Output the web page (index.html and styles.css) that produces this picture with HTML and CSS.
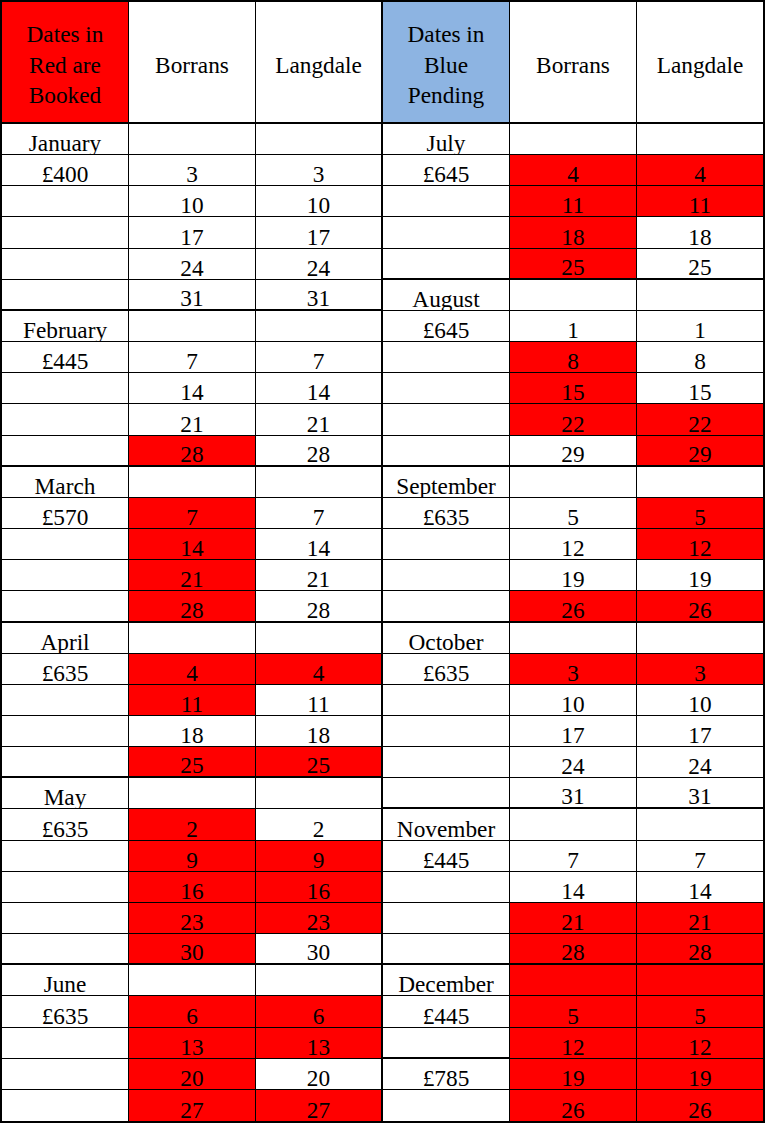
FILE: index.html
```html
<!DOCTYPE html>
<html lang="en">
<head>
<meta charset="utf-8">
<link rel="stylesheet" href="styles.css">
</head>
<body>
<div class="t">
  <div class="c h r">Dates in<br>Red are<br>Booked</div>
  <div class="c h">Borrans</div>
  <div class="c h">Langdale</div>
  <div class="c h b">Dates in<br>Blue<br>Pending</div>
  <div class="c h">Borrans</div>
  <div class="c h">Langdale</div>

  <div class="c">January</div><div class="c"></div><div class="c"></div><div class="c">July</div><div class="c"></div><div class="c"></div>
  <div class="c">£400</div><div class="c">3</div><div class="c">3</div><div class="c">£645</div><div class="c r">4</div><div class="c r">4</div>
  <div class="c"></div><div class="c">10</div><div class="c">10</div><div class="c"></div><div class="c r">11</div><div class="c r">11</div>
  <div class="c"></div><div class="c">17</div><div class="c">17</div><div class="c"></div><div class="c r">18</div><div class="c">18</div>
  <div class="c"></div><div class="c">24</div><div class="c">24</div><div class="c g"></div><div class="c g r">25</div><div class="c g">25</div>
  <div class="c g"></div><div class="c g">31</div><div class="c g">31</div><div class="c">August</div><div class="c"></div><div class="c"></div>
  <div class="c">February</div><div class="c"></div><div class="c"></div><div class="c">£645</div><div class="c">1</div><div class="c">1</div>
  <div class="c">£445</div><div class="c">7</div><div class="c">7</div><div class="c"></div><div class="c r">8</div><div class="c">8</div>
  <div class="c"></div><div class="c">14</div><div class="c">14</div><div class="c"></div><div class="c r">15</div><div class="c">15</div>
  <div class="c"></div><div class="c">21</div><div class="c">21</div><div class="c"></div><div class="c r">22</div><div class="c r">22</div>
  <div class="c g"></div><div class="c g r">28</div><div class="c g">28</div><div class="c g"></div><div class="c g">29</div><div class="c g r">29</div>
  <div class="c">March</div><div class="c"></div><div class="c"></div><div class="c">September</div><div class="c"></div><div class="c"></div>
  <div class="c">£570</div><div class="c r">7</div><div class="c">7</div><div class="c">£635</div><div class="c">5</div><div class="c r">5</div>
  <div class="c"></div><div class="c r">14</div><div class="c">14</div><div class="c"></div><div class="c">12</div><div class="c r">12</div>
  <div class="c"></div><div class="c r">21</div><div class="c">21</div><div class="c"></div><div class="c">19</div><div class="c">19</div>
  <div class="c g"></div><div class="c g r">28</div><div class="c g">28</div><div class="c g"></div><div class="c g r">26</div><div class="c g r">26</div>
  <div class="c">April</div><div class="c"></div><div class="c"></div><div class="c">October</div><div class="c"></div><div class="c"></div>
  <div class="c">£635</div><div class="c r">4</div><div class="c r">4</div><div class="c">£635</div><div class="c r">3</div><div class="c r">3</div>
  <div class="c"></div><div class="c r">11</div><div class="c">11</div><div class="c"></div><div class="c">10</div><div class="c">10</div>
  <div class="c"></div><div class="c">18</div><div class="c">18</div><div class="c"></div><div class="c">17</div><div class="c">17</div>
  <div class="c g"></div><div class="c g r">25</div><div class="c g r">25</div><div class="c"></div><div class="c">24</div><div class="c">24</div>
  <div class="c">May</div><div class="c"></div><div class="c"></div><div class="c g"></div><div class="c g">31</div><div class="c g">31</div>
  <div class="c">£635</div><div class="c r">2</div><div class="c">2</div><div class="c">November</div><div class="c"></div><div class="c"></div>
  <div class="c"></div><div class="c r">9</div><div class="c r">9</div><div class="c">£445</div><div class="c">7</div><div class="c">7</div>
  <div class="c"></div><div class="c r">16</div><div class="c r">16</div><div class="c"></div><div class="c">14</div><div class="c">14</div>
  <div class="c"></div><div class="c r">23</div><div class="c r">23</div><div class="c"></div><div class="c r">21</div><div class="c r">21</div>
  <div class="c g"></div><div class="c g r">30</div><div class="c g">30</div><div class="c g"></div><div class="c g r">28</div><div class="c g r">28</div>
  <div class="c">June</div><div class="c"></div><div class="c"></div><div class="c">December</div><div class="c r"></div><div class="c r"></div>
  <div class="c">£635</div><div class="c r">6</div><div class="c r">6</div><div class="c">£445</div><div class="c r">5</div><div class="c r">5</div>
  <div class="c"></div><div class="c r">13</div><div class="c r">13</div><div class="c g"></div><div class="c r">12</div><div class="c r">12</div>
  <div class="c"></div><div class="c r">20</div><div class="c">20</div><div class="c">£785</div><div class="c r">19</div><div class="c r">19</div>
  <div class="c"></div><div class="c r">27</div><div class="c r">27</div><div class="c"></div><div class="c r">26</div><div class="c r">26</div>
</div>
</body>
</html>
```

FILE: styles.css
```css
html, body {
  margin: 0;
  padding: 0;
  background: #ffffff;
}
.t {
  box-sizing: border-box;
  width: 765px;
  height: 1123px;
  border: 2px solid #000;
  display: grid;
  grid-template-columns: 127px 127px 127px 127px 127px 126px;
  grid-template-rows: 122px repeat(32, 1fr);
}
.c {
  box-sizing: border-box;
  border-right: 1px solid #000;
  border-bottom: 1px solid #000;
  display: flex;
  align-items: flex-end;
  justify-content: center;
  text-align: center;
  font-family: "Times New Roman", "Liberation Serif", Tinos, serif;
  font-size: 23.3px;
  line-height: 22px;
  color: #000;
  white-space: nowrap;
  background: #fff;
}
.c:nth-child(6n+3) {
  border-right: 2px solid #000;
}
.c:nth-child(6n) {
  border-right: none;
}
.c:nth-last-child(-n+6) {
  border-bottom: none;
}
.c.g {
  border-bottom: 2px solid #000;
}
.c.h {
  align-items: center;
  line-height: 30.5px;
  padding-top: 6px;
  border-bottom: 2px solid #000;
}
.c.r {
  background: #ff0000;
}
.c.b {
  background: #8db4e2;
}
```
